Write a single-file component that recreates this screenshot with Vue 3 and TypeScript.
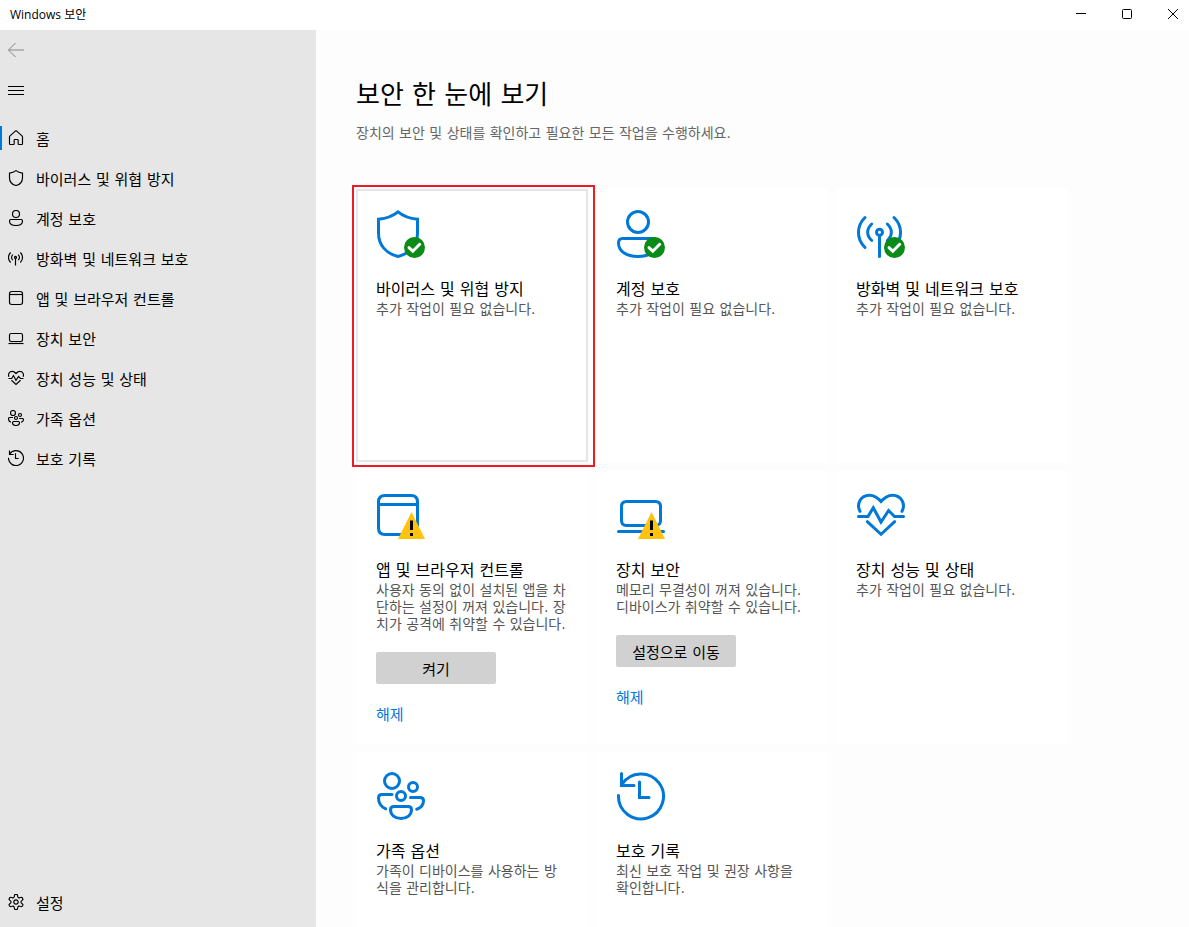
<script setup lang="ts">
import { ref } from 'vue'

interface Icon {
  paths: string[]
  // horizontal shift that centres the glyph in the narrow sidebar box
  shift: number
}

interface Tile {
  icon: string
  title: string
  text: string
  badge?: 'ok' | 'warn'
  action?: string
  marked?: boolean
}

const circle = (x: number, y: number, r: number): string =>
  `M${x - r} ${y}a${r} ${r} 0 1 0 ${2 * r} 0a${r} ${r} 0 1 0 ${-2 * r} 0Z`

const gear = (): string => {
  const points: string[] = []
  for (let i = 0; i < 72; i++) {
    const angle = (i * Math.PI) / 36
    const wave = Math.tanh(2 * Math.cos(6 * angle))
    const r = 19 + 4 * wave
    points.push(`${(24 + r * Math.sin(angle)).toFixed(2)} ${(24 - r * Math.cos(angle)).toFixed(2)}`)
  }
  return `M${points.join('L')}Z`
}

const icons: Record<string, Icon> = {
  home: {
    shift: 0,
    paths: ['M4.5 21Q4.5 19 6 17.5L22 3.2Q24 1.5 26 3.2L42 17.5Q43.5 19 43.5 21V41Q43.5 43.5 41 43.5H33Q30.5 43.5 30.5 41V31Q30.5 28.5 28 28.5H21Q18.5 28.5 18.5 31V41Q18.5 43.5 16 43.5H7Q4.5 43.5 4.5 41Z'],
  },
  shield: {
    shift: 3,
    paths: ['M21 1.9C16 6 9 8.6 1.5 9.2V23C1.5 35 9 43.5 21 46.5C33 43.5 40.5 35 40.5 23V9.2C33 8.6 26 6 21 1.9Z'],
  },
  account: {
    shift: 3,
    paths: [
      circle(21, 12, 10.5),
      'M5.5 28.5H36.5Q40.5 28.5 40.5 33C40.5 41 33 46.5 21 46.5C9 46.5 1.5 41 1.5 33Q1.5 28.5 5.5 28.5Z',
    ],
  },
  network: {
    shift: 0,
    paths: [
      'M8 7.5C-.7 16 -.7 29 8 37.5',
      'M14.7 14C9.3 19 9.3 25.5 14.7 30.5',
      'M37 7.5C45.7 16 45.7 29 37 37.5',
      'M30.3 14C35.7 19 35.7 25.5 30.3 30.5',
      circle(22.5, 22.3, 3),
      'M22.5 26V46.5',
    ],
  },
  app: {
    shift: 3,
    paths: [
      'M8 4.5H34Q40.5 4.5 40.5 11V37Q40.5 43.5 34 43.5H8Q1.5 43.5 1.5 37V11Q1.5 4.5 8 4.5Z',
      'M1.5 13.5H40.5',
    ],
  },
  laptop: {
    shift: 0,
    paths: [
      'M9.5 10.5H38.5Q43.5 10.5 43.5 15.5V29.5Q43.5 34.5 38.5 34.5H9.5Q4.5 34.5 4.5 29.5V15.5Q4.5 10.5 9.5 10.5Z',
      'M1.5 40.5H46.5',
    ],
  },
  heart: {
    shift: 0,
    paths: [
      'M3 20.3C-.8 13 3.5 4.2 12.5 4.2C17 4.2 20.5 6.5 24 10.5C27.5 6.5 31 4.2 35.5 4.2C44.5 4.2 48.8 13 45 20.3',
      'M1.5 25.5H11L16.3 16.7L24 31L31.6 19.5L37.5 25.5H46.5',
      'M10.3 30.7L24 43.3L37.7 30.7',
    ],
  },
  family: {
    shift: 0,
    paths: [
      circle(15, 9, 7.5),
      circle(36, 15, 4.5),
      circle(24, 24, 4.5),
      'M15 22.5H5Q1.5 22.5 1.5 26C1.5 31 4.5 35 8.7 36.8',
      'M33.5 25.5H43Q46.5 25.5 46.5 28.5C46.5 33 43.5 36 39.7 37.2',
      'M17 34.5H31Q34.5 34.5 34.5 37.5C34.5 43 30 46.5 24 46.5C18 46.5 13.5 43 13.5 37.5Q13.5 34.5 17 34.5Z',
    ],
  },
  history: {
    shift: 0,
    paths: ['M1.5 23.5A22.5 22.5 0 1 0 5.2 12', 'M4.5 1.5V13.5H17', 'M22.5 10V25.5H32'],
  },
  settings: { shift: 0, paths: [gear(), circle(24, 24, 6.5)] },
}

const nav = [
  { icon: 'home', label: '홈' },
  { icon: 'shield', label: '바이러스 및 위협 방지' },
  { icon: 'account', label: '계정 보호' },
  { icon: 'network', label: '방화벽 및 네트워크 보호' },
  { icon: 'app', label: '앱 및 브라우저 컨트롤' },
  { icon: 'laptop', label: '장치 보안' },
  { icon: 'heart', label: '장치 성능 및 상태' },
  { icon: 'family', label: '가족 옵션' },
  { icon: 'history', label: '보호 기록' },
]

const tiles: Tile[] = [
  { icon: 'shield', title: '바이러스 및 위협 방지', text: '추가 작업이 필요 없습니다.', badge: 'ok', marked: true },
  { icon: 'account', title: '계정 보호', text: '추가 작업이 필요 없습니다.', badge: 'ok' },
  { icon: 'network', title: '방화벽 및 네트워크 보호', text: '추가 작업이 필요 없습니다.', badge: 'ok' },
  {
    icon: 'app',
    title: '앱 및 브라우저 컨트롤',
    text: '사용자 동의 없이 설치된 앱을 차단하는 설정이 꺼져 있습니다. 장치가 공격에 취약할 수 있습니다.',
    badge: 'warn',
    action: '켜기',
  },
  {
    icon: 'laptop',
    title: '장치 보안',
    text: '메모리 무결성이 꺼져 있습니다. 디바이스가 취약할 수 있습니다.',
    badge: 'warn',
    action: '설정으로 이동',
  },
  { icon: 'heart', title: '장치 성능 및 상태', text: '추가 작업이 필요 없습니다.' },
  { icon: 'family', title: '가족 옵션', text: '가족이 디바이스를 사용하는 방식을 관리합니다.' },
  { icon: 'history', title: '보호 기록', text: '최신 보호 작업 및 권장 사항을 확인합니다.' },
]

const current = ref('home')
</script>

<template>
  <div class="window">
    <header class="titlebar">
      <span class="caption">Windows 보안</span>
      <div class="controls">
        <button type="button" aria-label="최소화">
          <svg viewBox="0 0 12 12"><path d="M1 5.5H11" /></svg>
        </button>
        <button type="button" aria-label="최대화">
          <svg viewBox="0 0 12 12"><rect x="1.5" y="1.5" width="9" height="9" rx="1" /></svg>
        </button>
        <button type="button" aria-label="닫기">
          <svg viewBox="0 0 12 12"><path d="M1 1L11 11M11 1L1 11" /></svg>
        </button>
      </div>
    </header>

    <div class="body">
      <aside class="sidebar">
        <button type="button" class="tool back" aria-label="뒤로">
          <svg viewBox="0 0 16 16"><path d="M.5 8H16M7.5 1L.5 8L7.5 15" /></svg>
        </button>
        <button type="button" class="tool" aria-label="메뉴">
          <svg viewBox="0 0 16 16"><path d="M0 4.5H16M0 8.5H16M0 12.5H16" /></svg>
        </button>
        <nav class="nav">
          <a
            v-for="item in nav"
            :key="item.icon"
            href="#"
            class="item"
            :class="{ current: current === item.icon }"
            @click.prevent="current = item.icon"
          >
            <svg class="small" :viewBox="`${-icons[item.icon].shift} 0 48 48`">
              <path v-for="d in icons[item.icon].paths" :key="d" :d="d" />
            </svg>
            <span>{{ item.label }}</span>
          </a>
        </nav>
        <a href="#" class="item settings" @click.prevent>
          <svg class="small" viewBox="0 0 48 48">
            <path v-for="d in icons.settings.paths" :key="d" :d="d" />
          </svg>
          <span>설정</span>
        </a>
      </aside>

      <main class="main">
        <h1>보안 한 눈에 보기</h1>
        <p class="lead">장치의 보안 및 상태를 확인하고 필요한 모든 작업을 수행하세요.</p>
        <div class="grid">
          <section v-for="tile in tiles" :key="tile.icon" class="tile" :class="{ marked: tile.marked }">
            <svg class="large" viewBox="-1 0 50 50">
              <path v-for="d in icons[tile.icon].paths" :key="d" :d="d" />
              <g v-if="tile.badge === 'ok'">
                <circle class="ok" cx="37.5" cy="37.5" r="10.5" />
                <path class="tick" d="M32 37.7L35.8 41.2L42.7 34.3" />
              </g>
              <g v-if="tile.badge === 'warn'">
                <path class="warn" d="M34.5 21L48 48H21Z" />
                <path class="mark" d="M33 29.5H36V39H33ZM33 42H36V45H33Z" />
              </g>
            </svg>
            <h2><a href="#" @click.prevent>{{ tile.title }}</a></h2>
            <p class="text">{{ tile.text }}</p>
            <template v-if="tile.action">
              <button type="button" class="action">{{ tile.action }}</button>
              <a href="#" class="dismiss" @click.prevent>해제</a>
            </template>
          </section>
        </div>
      </main>
    </div>
  </div>
</template>

<style>
body {
  margin: 0;
}
</style>

<style scoped>
.window {
  display: flex;
  flex-direction: column;
  height: 100vh;
  overflow: hidden;
  background: #fff;
  color: #000;
  font-family: 'DejaVu Sans', 'Noto Sans CJK KR', sans-serif;
  font-size: 15px;
}

a {
  color: inherit;
  text-decoration: none;
}

button {
  border: 0;
  padding: 0;
  background: none;
  color: inherit;
  font: inherit;
}

svg {
  display: block;
  flex: none;
  fill: none;
  stroke: currentColor;
}

.titlebar {
  display: flex;
  flex: none;
  align-items: flex-start;
  justify-content: space-between;
  height: 30px;
  padding: 0 1px 0 10px;
}

.caption {
  font-family: 'Open Sans', 'Noto Sans CJK KR', sans-serif;
  font-size: 12px;
  line-height: 30px;
}

.controls {
  display: flex;
  gap: 16px;
}

.controls button {
  display: grid;
  place-items: center;
  width: 30px;
  height: 28px;
}

.controls svg {
  width: 12px;
  height: 12px;
}

.body {
  display: flex;
  flex: 1;
  min-height: 0;
}

.sidebar {
  display: flex;
  flex: none;
  flex-direction: column;
  width: 316px;
  padding-bottom: 5px;
  box-sizing: border-box;
  background: #e6e6e6;
}

.tool {
  display: flex;
  align-items: center;
  width: 48px;
  height: 40px;
  padding-left: 8px;
}

.tool svg {
  width: 16px;
  height: 16px;
}

.back {
  color: #858585;
}

.nav {
  margin-top: 8px;
}

.item {
  position: relative;
  display: flex;
  align-items: center;
  gap: 12px;
  height: 40px;
  padding-left: 8px;
}

.item.current::before {
  content: '';
  position: absolute;
  left: 0;
  top: 8px;
  width: 2px;
  height: 24px;
  background: #0078d7;
}

.settings {
  margin-top: auto;
}

.small {
  width: 16px;
  height: 16px;
  stroke-width: 3.5;
}

.main {
  flex: 1;
  min-width: 0;
  padding: 47px 0 0 40px;
  overflow: hidden;
  background: #fdfdfd;
}

h1 {
  margin: 0;
  font-size: 26px;
  font-weight: 400;
  line-height: 36px;
}

.lead {
  margin: 10px 0 46px;
  color: #666;
  font-size: 14px;
  line-height: 20px;
}

.grid {
  display: grid;
  grid-template-columns: repeat(auto-fill, 232px);
  grid-auto-rows: minmax(273px, auto);
  gap: 8px;
}

.tile {
  position: relative;
  box-sizing: border-box;
  padding: 21px 20px 12px;
  background: #fff;
}

.marked {
  box-shadow: inset 0 0 0 2px #e6e6e6;
}

.marked::after {
  content: '';
  position: absolute;
  inset: -4px -7px -5px -4px;
  border: 2px solid #ed1c24;
  pointer-events: none;
}

.large {
  width: 50px;
  height: 50px;
  color: #0078d7;
  stroke-width: 3;
  stroke-linecap: round;
}

.ok {
  fill: #0a8a16;
  stroke: none;
}

.tick {
  stroke: #fff;
}

.warn {
  fill: #ffc20e;
  stroke: none;
}

.mark {
  fill: #000;
  stroke: none;
}

h2 {
  margin: 19px 0 0;
  font-size: 16px;
  font-weight: 400;
  line-height: 22px;
}

.text {
  margin: 0;
  color: #555;
  font-size: 14px;
  line-height: 17px;
}

.action {
  display: block;
  width: 120px;
  height: 32px;
  margin-top: 19px;
  border-radius: 2px;
  background: #d1d1d1;
}

.dismiss {
  display: inline-block;
  margin-top: 21px;
  color: #0078d7;
  line-height: 20px;
}
</style>
